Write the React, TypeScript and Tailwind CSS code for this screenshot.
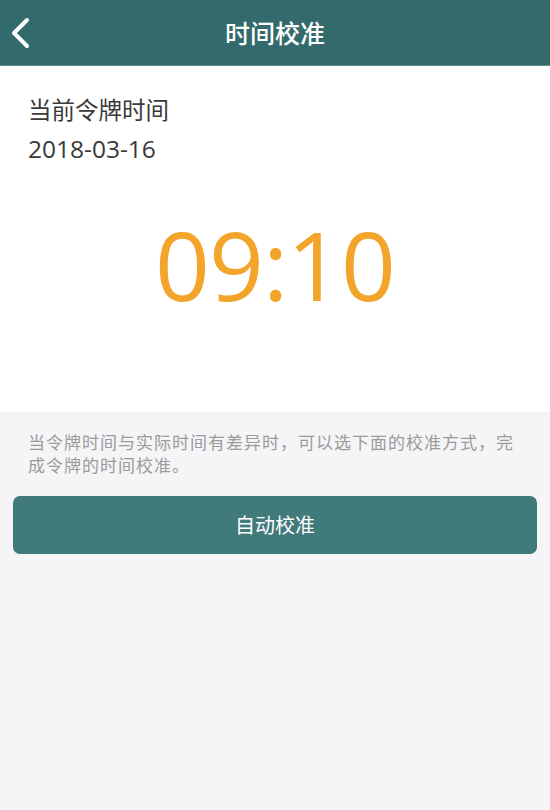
export default function App() {
  const font = { fontFamily: '"PingFang SC", "Noto Sans CJK SC", sans-serif' }
  const num = { fontFamily: '"Open Sans", "Noto Sans", sans-serif' }
  return (
    <div className="w-[550px] h-[810px] bg-[#f5f4f7] flex flex-col" style={font}>
      {/* header */}
      <div className="relative h-[66px] bg-[#336a6b] border-b border-[#5f8f8f] flex items-center justify-center">
        <svg className="absolute left-[9px] top-[17px]" width="22" height="32" viewBox="0 0 22 32">
          <path d="M18 3 L5 16 L18 29" fill="none" stroke="#fff" strokeWidth="4" strokeLinecap="round" strokeLinejoin="round" />
        </svg>
        <span className="text-white text-[25px] font-medium">时间校准</span>
      </div>

      {/* token time */}
      <div className="bg-white h-[346px] px-[28px] pt-[26px]">
        <div className="text-[23.5px] leading-[34px] text-[#3a3a3a]">当前令牌时间</div>
        <div className="mt-[8px] text-[24.5px] leading-[30px] text-[#3a3a3a]" style={num}>
          2018-03-16
        </div>
        <div className="mt-[40px] text-center text-[#f3a42b] text-[96px] leading-[120px] tracking-[-1px]" style={num}>
          09:10
        </div>
      </div>

      {/* description */}
      <div className="pl-[28px] pr-[30px] pt-[18px] text-[17px] leading-[23px] tracking-[1px] text-[#9b9b9b]">
        当令牌时间与实际时间有差异时，可以选下面的校准方式，完成令牌的时间校准。
      </div>

      <div className="px-[13px] pt-[20px]">
        <button className="w-full h-[58px] rounded-[7px] bg-[#417a7b] text-white text-[20px]">自动校准</button>
      </div>
    </div>
  )
}
